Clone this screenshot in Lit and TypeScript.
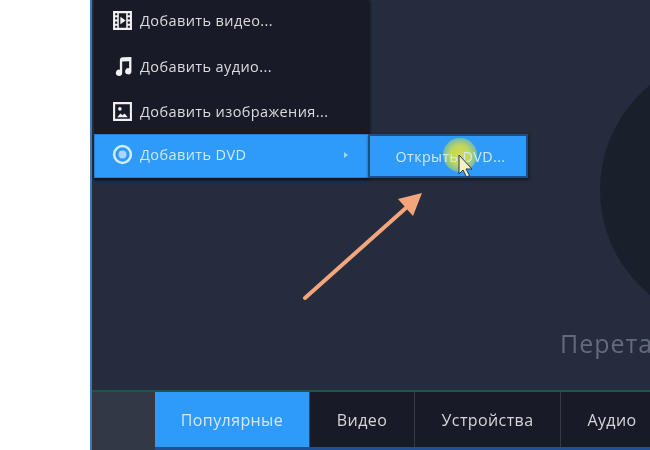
import { LitElement, css, html, svg } from 'lit';
import { customElement } from 'lit/decorators.js';

const MENU_ICONS = {
  video: svg`<path fill="#f1f1f1" fill-rule="evenodd" d="M1 1h18v18H1zM3 3v2h2V3zM3 7v2h2V7zM3 11v2h2v-2zM3 15v2h2v-2zM15 3v2h2V3zM15 7v2h2V7zM15 11v2h2v-2zM15 15v2h2v-2zM6.500 3v14h7V3z"/><path fill="#f1f1f1" d="M8 6.500l5 3.500-5 3.500z"/>`,
  audio: svg`<path fill="#f1f1f1" d="M7.500 3.500Q7.500 1.500 10 1.300L18.500 1v13.500a3 3 0 1 1-2.200-2.900V5L9.700 5.300V16a3 3 0 1 1-2.200-2.900z"/>`,
  image: svg`<path fill="#f1f1f1" fill-rule="evenodd" d="M1 1h18v18H1zM3 3v14h14V3z"/><circle fill="#f1f1f1" cx="7.500" cy="7.500" r="1.700"/><path fill="#f1f1f1" d="M5 15.500l3-3.500 2 1.500 2-1.500 3 3.500z"/>`,
  dvd: svg`<circle cx="10" cy="10" r="8" fill="none" stroke="#d5ecff" stroke-width="2.400"/><circle cx="10" cy="10" r="3.800" fill="#a9d8ff"/>`,
};

const MENU_ITEMS = [
  { label: 'Добавить видео...', icon: MENU_ICONS.video },
  { label: 'Добавить аудио...', icon: MENU_ICONS.audio },
  { label: 'Добавить изображения...', icon: MENU_ICONS.image },
  { label: 'Добавить DVD', icon: MENU_ICONS.dvd, active: true },
];

const TABS = [
  { label: 'Популярные', width: 155, active: true },
  { label: 'Видео', width: 105 },
  { label: 'Устройства', width: 146 },
  { label: 'Аудио', width: 103 },
];

@customElement('app-root')
export class AppRoot extends LitElement {
  static styles = css`
    :host {
      display: flex;
      width: 650px;
      height: 450px;
      overflow: hidden;
      background: #fff;
      font-family: 'Open Sans', 'Noto Sans', sans-serif;
    }

    .page-margin {
      flex: 0 0 90px;
      background: #fff;
    }

    .window {
      flex: 1;
      display: flex;
      flex-direction: column;
      min-width: 0;
      border-left: 2px solid #3f78b4;
      background: #252c3d;
      filter: blur(0.35px);
    }

    .workspace {
      flex: 1;
      position: relative;
      overflow: hidden;
      padding-left: 2px;
    }

    .drop-circle {
      position: absolute;
      left: 508px;
      top: 55px;
      width: 270px;
      height: 270px;
      border-radius: 50%;
      background: #1a1f2c;
    }

    .drop-hint {
      position: absolute;
      left: 468px;
      top: 325px;
      font-size: 25px;
      line-height: 36px;
      letter-spacing: 1px;
      white-space: nowrap;
      color: #636b7b;
    }

    .menu {
      position: relative;
      display: flex;
      flex-direction: column;
      width: 275px;
      background: #181b27;
      box-shadow: 1px 1px 2px #11141d;
    }

    .menu-item {
      display: flex;
      align-items: center;
      gap: 7px;
      height: 45px;
      box-sizing: border-box;
      padding: 0 0 1px 18px;
      font-size: 14.500px;
      letter-spacing: 0.4px;
      color: #dcdcde;
    }

    .menu-item:first-child {
      height: 44px;
      padding-bottom: 4px;
    }

    .menu-item svg {
      flex: none;
      width: 21px;
      height: 21px;
    }

    .menu-item.active {
      position: relative;
      height: 44px;
      padding-bottom: 3px;
      background: #2e9bfb;
      color: #cfe9ff;
      box-shadow: inset 0 0 0 1px #2a7fd0, 0 2px 2px #11141d;
    }

    .chevron {
      position: absolute;
      left: 250px;
      top: 18px;
      border-left: 4px solid #9fd2fd;
      border-top: 3.500px solid transparent;
      border-bottom: 3.500px solid transparent;
    }

    .submenu {
      position: absolute;
      left: 276px;
      top: 134px;
      display: flex;
      align-items: center;
      justify-content: center;
      width: 160px;
      height: 44px;
      box-sizing: border-box;
      padding: 0 0 0 5px;
      background: #2e9bfb;
      border: 2px solid #1e4f86;
      font-size: 14.300px;
      letter-spacing: 0.4px;
      color: #cfe9ff;
      box-shadow: 1px 2px 3px #151925;
    }

    .submenu span {
      position: relative;
    }

    .click-glow {
      position: absolute;
      left: 73px;
      top: 2px;
      width: 34px;
      height: 34px;
      border-radius: 50%;
      background: radial-gradient(circle, #d2dc50 0%, #c0d75e 40%, #2e9bfb00 100%);
    }

    .overlay {
      position: absolute;
      left: 0;
      top: 0;
      width: 558px;
      height: 390px;
      pointer-events: none;
    }

    .tabs {
      flex: none;
      display: flex;
      height: 60px;
      box-sizing: border-box;
      border-top: 2px solid #17574f;
      background: #333846;
      padding-left: 63px;
    }

    .tab-row {
      flex: 1;
      display: flex;
      border-bottom: 3px solid #1f4f94;
      background: #181b27;
    }

    .tab {
      flex: none;
      display: flex;
      align-items: center;
      justify-content: center;
      box-sizing: border-box;
      border-right: 1px solid #343945;
      font-size: 16px;
      letter-spacing: 0.4px;
      color: #d6d6d8;
    }

    .tab.active {
      background: #2e9bfb;
      border-right: 1px solid #1e4f86;
      color: #cfe9ff;
    }
  `;

  render() {
    return html`
      <div class="page-margin"></div>
      <div class="window">
        <div class="workspace">
          <div class="drop-circle"></div>
          <div class="drop-hint">Перетащите файлы</div>
          <div class="menu">
            ${MENU_ITEMS.map(
              item => html`
                <div class="menu-item ${item.active ? 'active' : ''}">
                  <svg viewBox="0 0 20 20">${item.icon}</svg>
                  <span>${item.label}</span>
                  ${item.active ? html`<i class="chevron"></i>` : ''}
                </div>
              `,
            )}
          </div>
          <div class="submenu">
            <div class="click-glow"></div>
            <span>Открыть DVD...</span>
          </div>
          <svg class="overlay" viewBox="0 0 558 390">
            <path d="M213 298L315 207" stroke="#f5a57b" stroke-width="4" stroke-linecap="round" />
            <path d="M330 193L306 199L321 216z" fill="#f5a57b" />
            <path
              d="M367 155v19l4-4 3.500 7 3-1.500-3.500-6.500h6z"
              fill="#f4f2c0"
              stroke="#2a3350"
              stroke-width="1"
            />
          </svg>
        </div>
        <div class="tabs">
          <div class="tab-row">
            ${TABS.map(
              tab => html`
                <div
                  class="tab ${tab.active ? 'active' : ''}"
                  style="width: ${tab.width}px"
                >
                  ${tab.label}
                </div>
              `,
            )}
          </div>
        </div>
      </div>
    `;
  }
}
